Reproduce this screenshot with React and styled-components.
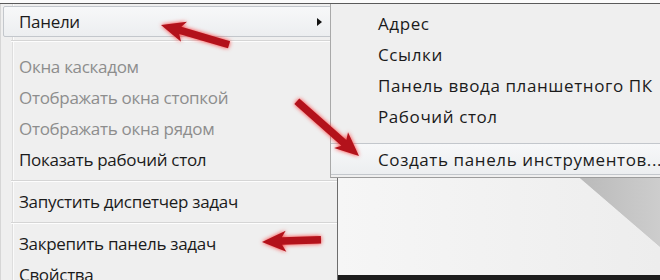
import React from "react";
import styled, { createGlobalStyle } from "styled-components";

const GlobalStyle = createGlobalStyle`
  html, body { margin: 0; padding: 0; background: #fbfbfb; }
  body { font-family: "Open Sans", "Noto Sans", "DejaVu Sans", sans-serif; }
`;

const leftItems = [
  { type: "gap", size: 14, line: 3 },
  { label: "Окна каскадом", disabled: true },
  { label: "Отображать окна стопкой", disabled: true },
  { label: "Отображать окна рядом", disabled: true },
  { label: "Показать рабочий стол" },
  { type: "gap", size: 11, line: 5 },
  { label: "Запустить диспетчер задач" },
  { type: "gap", size: 11, line: 5 },
  { label: "Закрепить панель задач" },
  { label: "Свойства" },
];

const subItems = ["Адрес", "Ссылки", "Панель ввода планшетного ПК", "Рабочий стол"];

const arrows = [
  { x1: 229, y1: 45, x2: 161, y2: 25 },
  { x1: 297, y1: 101, x2: 359, y2: 156 },
  { x1: 321, y1: 240, x2: 262, y2: 242 },
];

const RedArrow = ({ x1, y1, x2, y2 }) => {
  const len = Math.hypot(x2 - x1, y2 - y1);
  const deg = (Math.atan2(y2 - y1, x2 - x1) * 180) / Math.PI;
  const h = len - 20;
  return (
    <g transform={`translate(${x1} ${y1}) rotate(${deg})`}>
      <polygon
        points={`0,-3.5 ${h},-3.5 ${h - 4},-10.5 ${len},0 ${h - 4},10.5 ${h},4 0,4`}
      />
    </g>
  );
};

const App = () => {
  return (
    <>
      <GlobalStyle />
      <Screen>
        <Frame>
          <Menu>
            <Row $hot>
              <span>Панели</span>
              <SubArrow />
            </Row>
            {leftItems.map((it, i) =>
              it.type === "gap" ? (
                <Separator key={i} $size={it.size} $line={it.line} />
              ) : (
                <Row key={i} $disabled={it.disabled}>
                  {it.label}
                </Row>
              )
            )}
          </Menu>
          <Side>
            <SubMenu>
              {subItems.map((s) => (
                <SubRow key={s}>{s}</SubRow>
              ))}
              <SubSeparator />
              <SubRow $hot>Создать панель инструментов...</SubRow>
            </SubMenu>
            <Desktop>
              <Curl />
            </Desktop>
            <Taskbar />
          </Side>
        </Frame>
        <Overlay viewBox="0 0 660 280">
          <g fill="#b3121b">
            {arrows.map((a, i) => (
              <RedArrow key={i} {...a} />
            ))}
          </g>
        </Overlay>
      </Screen>
    </>
  );
};
export default App;

const Screen = styled.div`
  position: relative;
  width: 660px;
  height: 280px;
  overflow: hidden;
  padding-top: 3px;
  box-sizing: border-box;
  background: #fbfbfb;
`;

const Frame = styled.div`
  display: flex;
  height: 277px;
  border-top: 1px solid #5a5a5a;
  box-sizing: border-box;
  overflow: hidden;
`;

const Menu = styled.div`
  width: 338px;
  flex: none;
  box-sizing: border-box;
  padding-top: 2px;
  border-left: 1px solid #d6d6d6;
  border-right: 1px solid #6d6d6d;
  background:
    linear-gradient(
      to right,
      transparent 11px,
      #dedede 11px,
      #dedede 12px,
      #fbfbfb 12px,
      #fbfbfb 13px,
      transparent 13px
    ),
    #efefef;
`;

const Row = styled.div`
  height: 31px;
  margin: 0 2px;
  padding: 0 12px 0 15px;
  box-sizing: border-box;
  display: flex;
  align-items: center;
  justify-content: space-between;
  font-size: 17px;
  letter-spacing: -0.3px;
  white-space: nowrap;
  color: ${(p) => (p.$disabled ? "#8d8d8d" : "#1b1b1b")};
  border: 1px solid ${(p) => (p.$hot ? "#c3c7cc" : "transparent")};
  border-radius: 2px;
  background: ${(p) =>
    p.$hot ? "linear-gradient(#f7f8f9, #eceef0)" : "transparent"};
`;

const SubArrow = styled.i`
  width: 0;
  height: 0;
  border-top: 4px solid transparent;
  border-bottom: 4px solid transparent;
  border-left: 5px solid #111;
`;

const Separator = styled.div`
  height: ${(p) => p.$size}px;
  margin-left: 10px;
  box-sizing: border-box;
  padding-top: ${(p) => p.$line}px;
  &::after {
    content: "";
    display: block;
    height: 1px;
    background: #d5d5d5;
    border-bottom: 1px solid #fdfdfd;
  }
`;

const Side = styled.div`
  width: 330px;
  flex: none;
  margin-left: -8px;
  position: relative;
  z-index: 1;
`;

const SubMenu = styled.div`
  height: 174px;
  box-sizing: border-box;
  padding: 4px 0 2px 0;
  background: #efefef;
  border-left: 1px solid #a9a9a9;
  border-bottom: 1px solid #9c9c9c;
  display: flex;
  flex-direction: column;
`;

const SubRow = styled.div`
  height: ${(p) => (p.$hot ? 32 : 31)}px;
  flex: none;
  box-sizing: border-box;
  padding-left: 47px;
  display: flex;
  align-items: center;
  font-size: 17px;
  letter-spacing: 0.6px;
  color: #1b1b1b;
  white-space: nowrap;
  margin-right: ${(p) => (p.$hot ? "-4px" : "0")};
  border: 1px solid ${(p) => (p.$hot ? "#c3c7cc" : "transparent")};
  border-left: 0;
  background: ${(p) =>
    p.$hot ? "linear-gradient(#f7f8f9, #eceef0)" : "transparent"};
`;

const SubSeparator = styled.div`
  height: 11px;
  flex: none;
`;

const Desktop = styled.div`
  position: relative;
  height: 97px;
  margin-left: 8px;
  background-color: #f3f3f3;
  background-image: linear-gradient(to right, #f6f6f6, #ededed);
`;

/* shadow of the curled page, lower right */
const Curl = styled.div`
  position: absolute;
  inset: 0;
  clip-path: polygon(242px 0, 100% 0, 100% 71%);
  background-color: #c4c4c4;
  background-image: linear-gradient(to right, #b6b6b6 70%, #cdcdcd);
`;

const Taskbar = styled.div`
  height: 5px;
  margin-left: 8px;
  background-color: #1d1d1d;
`;

const Overlay = styled.svg`
  position: absolute;
  left: 0;
  top: 0;
  width: 660px;
  height: 280px;
  pointer-events: none;
  z-index: 2;
  filter: drop-shadow(0 0 2px rgba(255, 30, 30, 0.9));
`;
